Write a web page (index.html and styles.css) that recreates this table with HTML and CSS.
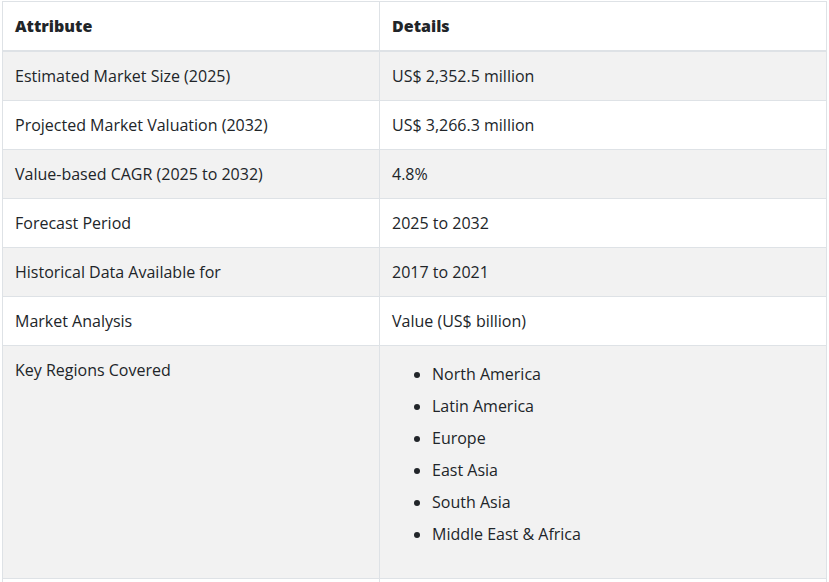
FILE: index.html
```html
<!DOCTYPE html>
<html lang="en">
<head>
<meta charset="utf-8">
<title>Market Report Scope</title>
<link rel="stylesheet" href="styles.css">
</head>
<body>
<div class="wrap">
<table class="report-table">
  <thead>
    <tr><th class="col-attr">Attribute</th><th>Details</th></tr>
  </thead>
  <tbody>
    <tr><td>Estimated Market Size (2025)</td><td>US$ 2,352.5 million</td></tr>
    <tr><td>Projected Market Valuation (2032)</td><td>US$ 3,266.3 million</td></tr>
    <tr><td>Value-based CAGR (2025 to 2032)</td><td>4.8%</td></tr>
    <tr><td>Forecast Period</td><td>2025 to 2032</td></tr>
    <tr><td>Historical Data Available for</td><td>2017 to 2021</td></tr>
    <tr><td>Market Analysis</td><td>Value (US$ billion)</td></tr>
    <tr>
      <td>Key Regions Covered</td>
      <td>
        <ul class="regions">
          <li>North America</li>
          <li>Latin America</li>
          <li>Europe</li>
          <li>East Asia</li>
          <li>South Asia</li>
          <li>Middle East &amp; Africa</li>
        </ul>
      </td>
    </tr>
    <tr class="row-next"><td></td><td></td></tr>
  </tbody>
</table>
</div>
</body>
</html>
```

FILE: styles.css
```css
html, body {
  margin: 0;
  padding: 0;
  background: #ffffff;
}
body {
  font-family: "Open Sans", "Liberation Sans", sans-serif;
  font-size: 16px;
  line-height: 24px;
  color: #212529;
}
.wrap {
  padding: 1px 2px 0 2px;
}
.report-table {
  width: 825px;
  border-collapse: collapse;
  border: 1px solid #dee2e6;
}
.report-table th,
.report-table td {
  border: 1px solid #dee2e6;
  padding: 12px;
  text-align: left;
  vertical-align: top;
}
.report-table th {
  font-weight: 800;
  border-bottom: 2px solid #dee2e6;
}
.col-attr {
  width: 352px;
}
.report-table tbody tr:nth-child(odd) {
  background: #f2f2f2;
}
.row-next td {
  height: 24px;
}
.regions {
  margin: 0 0 16px 0;
  padding-left: 40px;
}
.regions li {
  padding: 4px 0;
}
```
